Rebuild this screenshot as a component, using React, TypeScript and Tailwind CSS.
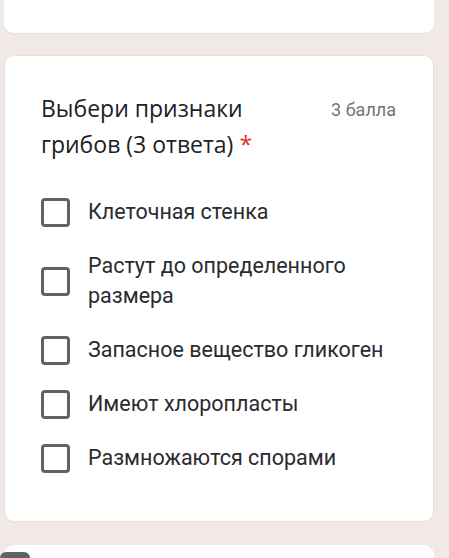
import React from "react";

const options = [
  ["Клеточная стенка"],
  ["Растут до определенного", "размера"],
  ["Запасное вещество гликоген"],
  ["Имеют хлоропласты"],
  ["Размножаются спорами"],
];

function Box() {
  return <div className="w-[29px] h-[29px] shrink-0 rounded-[4px] border-[3px] border-[#5f6368]" />;
}

export default function App() {
  return (
    <div className="w-[449px] h-[558px] overflow-hidden bg-[#f1e9e5] flex flex-col" style={{ fontFamily: "Roboto, 'Noto Sans', sans-serif" }}>
      <div className="ml-[4px] w-[430px] h-[34px] bg-white rounded-b-[10px] shrink-0 border-b border-[#e6deda]" />
      <div className="ml-[4px] mt-[21px] w-[430px] h-[467px] bg-white rounded-[10px] shrink-0 border border-[#e8e0dc] pl-[36px] pr-[20px] pt-[34px]">
        <div className="flex justify-between">
          <div className="text-[23px] leading-[36px] text-[#202124]" style={{ fontFamily: "'Open Sans', Roboto, sans-serif" }}>
            Выбери признаки<br />грибов (3 ответа) <span className="text-[#d93025]">*</span>
          </div>
          <div className="text-[18px] leading-[22px] text-[#70757a] mt-[9px] mr-[17px]">3 балла</div>
        </div>
        <div className="mt-[35px] flex flex-col gap-[24px]">
          {options.map((o, i) => (
            <div key={i} className="flex items-center gap-[18px]">
              <Box />
              <div className="text-[21.5px] leading-[30px] text-[#2a2b2e]">
                {o.map((l, j) => (
                  <div key={j}>{l}</div>
                ))}
              </div>
            </div>
          ))}
        </div>
      </div>
      <div className="ml-[4px] mt-[23px] w-[430px] h-[40px] bg-white rounded-t-[10px] shrink-0 relative">
        <div className="absolute -left-[4px] top-[7px] w-[30px] h-[20px] bg-[#5f6368] rounded-t-[6px]" />
      </div>
    </div>
  );
}
